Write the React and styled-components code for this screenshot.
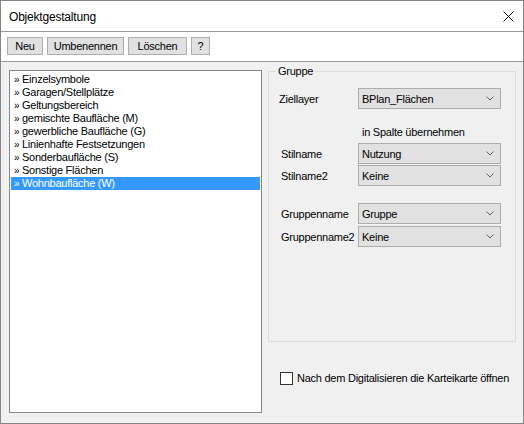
import styled, { createGlobalStyle } from "styled-components";

const GlobalStyle = createGlobalStyle`
  html, body {
    margin: 0;
    padding: 0;
    background: #ffffff;
  }
  * {
    box-sizing: border-box;
  }
`;

const entries = [
  "Einzelsymbole",
  "Garagen/Stellplätze",
  "Geltungsbereich",
  "gemischte Baufläche (M)",
  "gewerbliche Baufläche (G)",
  "Linienhafte Festsetzungen",
  "Sonderbaufläche (S)",
  "Sonstige Flächen",
  "Wohnbaufläche (W)",
];

const Chevron = () => (
  <svg width="8" height="5" viewBox="0 0 8 5">
    <polyline points="0.5,0.5 4,4 7.5,0.5" fill="none" stroke="#606060" strokeWidth="1" />
  </svg>
);

const CloseIcon = () => (
  <svg width="11" height="11" viewBox="0 0 11 11">
    <path d="M0.5 0.5 L10.5 10.5 M10.5 0.5 L0.5 10.5" stroke="#111" strokeWidth="1" />
  </svg>
);

const Dropdown = ({ value }) => (
  <Select>
    <span>{value}</span>
    <Chevron />
  </Select>
);

const App = () => {
  return (
    <>
      <GlobalStyle />
      <Window>
        <TitleBar>
          <Title>Objektgestaltung</Title>
          <CloseIcon />
        </TitleBar>

        <Toolbar>
          <ToolButton $w={36}>Neu</ToolButton>
          <ToolButton $w={77}>Umbenennen</ToolButton>
          <ToolButton $w={59}>Löschen</ToolButton>
          <ToolButton $w={19}>?</ToolButton>
        </Toolbar>

        <Body>
          <ListBox>
            {entries.map((e, i) => (
              <ListItem key={e} $selected={i === entries.length - 1}>
                <Bullet>»</Bullet>
                {e}
              </ListItem>
            ))}
          </ListBox>

          <RightColumn>
            <GroupBox>
              <GroupLabel>Gruppe</GroupLabel>

              <FormRow $top={16} $indent>
                <Label $indent>Ziellayer</Label>
                <Dropdown value="BPlan_Flächen" />
              </FormRow>

              <Note>in Spalte übernehmen</Note>

              <FormRow $top={4}>
                <Label>Stilname</Label>
                <Dropdown value="Nutzung" />
              </FormRow>
              <FormRow $top={1}>
                <Label>Stilname2</Label>
                <Dropdown value="Keine" />
              </FormRow>

              <FormRow $top={17}>
                <Label>Gruppenname</Label>
                <Dropdown value="Gruppe" />
              </FormRow>
              <FormRow $top={2}>
                <Label>Gruppenname2</Label>
                <Dropdown value="Keine" />
              </FormRow>
            </GroupBox>

            <CheckRow>
              <CheckBox />
              <CheckLabel>Nach dem Digitalisieren die Karteikarte öffnen</CheckLabel>
            </CheckRow>
          </RightColumn>
        </Body>
      </Window>
    </>
  );
};

export default App;

const uiFont = `"Liberation Sans", Arial, sans-serif`;

export const Window = styled.div`
  width: 524px;
  height: 424px;
  border: 1px solid #858585;
  background: #f0f0f0;
  display: flex;
  flex-direction: column;
  font-family: ${uiFont};
  font-size: 11px;
  letter-spacing: -0.25px;
  color: #000;
`;

export const TitleBar = styled.div`
  height: 30px;
  background: #ffffff;
  display: flex;
  align-items: center;
  justify-content: space-between;
  padding: 1px 9px 0 8px;
`;

export const Title = styled.div`
  font-size: 12px;
  letter-spacing: -0.2px;
  color: #000;
`;

export const Toolbar = styled.div`
  height: 31px;
  background: #ffffff;
  border-top: 1px solid #9a9a9a;
  border-bottom: 1px solid #9a9a9a;
  display: flex;
  align-items: flex-start;
  gap: 4px;
  padding: 5px 0 0 6px;
`;

export const ToolButton = styled.div`
  width: ${({ $w }) => $w}px;
  height: 18px;
  background: #e1e1e1;
  border: 1px solid #adadad;
  display: flex;
  align-items: center;
  justify-content: center;
  line-height: 1;
`;

export const Body = styled.div`
  flex: 1;
  display: flex;
  gap: 6px;
  padding: 8px 7px 10px 8px;
`;

export const ListBox = styled.div`
  width: 253px;
  height: 343px;
  background: #ffffff;
  border: 1px solid #828790;
  padding: 2px 1px;
`;

export const ListItem = styled.div`
  height: 13px;
  line-height: 13px;
  padding-left: 3px;
  white-space: nowrap;
  background: ${({ $selected }) => ($selected ? "#3399ff" : "transparent")};
  color: ${({ $selected }) => ($selected ? "#ffffff" : "#000000")};
`;

export const Bullet = styled.span`
  display: inline-block;
  width: 8px;
  font-size: 10px;
`;

export const RightColumn = styled.div`
  width: 248px;
  display: flex;
  flex-direction: column;
  padding-top: 1px;
`;

export const GroupBox = styled.div`
  position: relative;
  height: 271px;
  border: 1px solid #dcdcdc;
  display: flex;
  flex-direction: column;
`;

export const GroupLabel = styled.div`
  position: absolute;
  left: 7px;
  top: -7px;
  padding: 0 2px;
  line-height: 13px;
  background: #f0f0f0;
`;

export const FormRow = styled.div`
  display: flex;
  align-items: center;
  margin-top: ${({ $top }) => $top}px;
  padding-left: ${({ $indent }) => ($indent ? 10 : 12)}px;
`;

export const Label = styled.div`
  width: ${({ $indent }) => ($indent ? 79 : 77)}px;
  white-space: nowrap;
`;

export const Select = styled.div`
  width: 143px;
  height: 21px;
  background: #e1e1e1;
  border: 1px solid #adadad;
  display: flex;
  align-items: center;
  justify-content: space-between;
  padding: 0 6px 0 3px;
`;

export const Note = styled.div`
  margin-top: 17px;
  padding-left: 93px;
  line-height: 13px;
`;

export const CheckRow = styled.div`
  display: flex;
  align-items: center;
  gap: 4px;
  margin-top: 30px;
  padding-left: 12px;
`;

export const CheckBox = styled.div`
  width: 13px;
  height: 13px;
  background: #ffffff;
  border: 1px solid #333333;
`;

export const CheckLabel = styled.div`
  white-space: nowrap;
  line-height: 13px;
`;
